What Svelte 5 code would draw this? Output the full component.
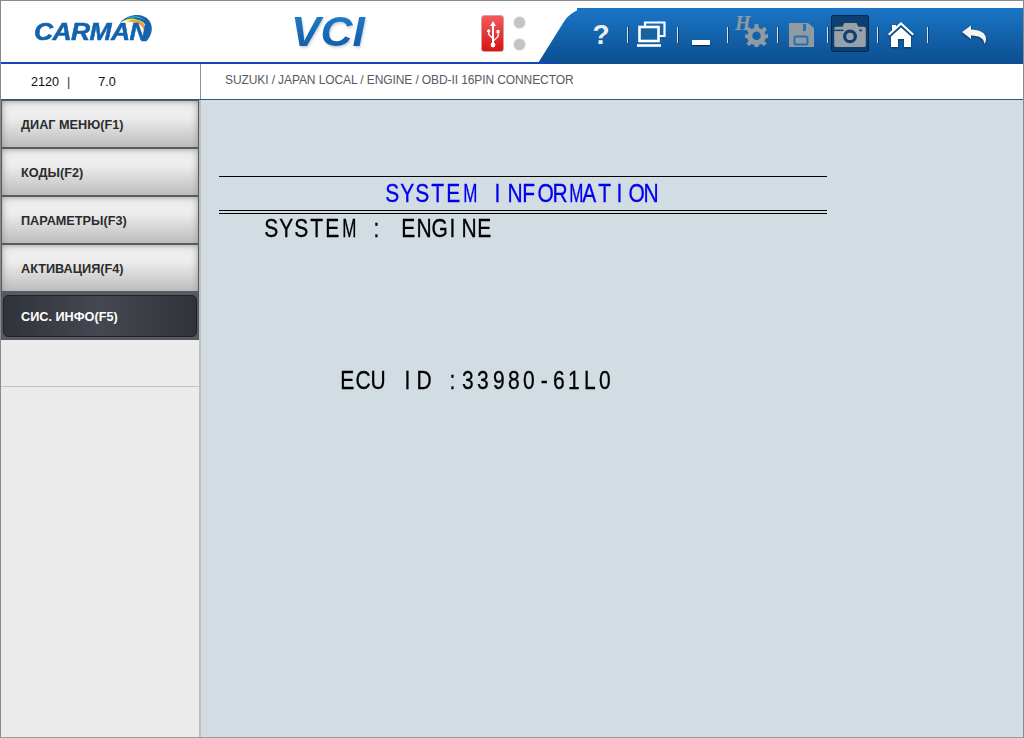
<script>
  const menu = [
    { label: 'ДИАГ МЕНЮ(F1)' },
    { label: 'КОДЫ(F2)' },
    { label: 'ПАРАМЕТРЫ(F3)' },
    { label: 'АКТИВАЦИЯ(F4)' },
    { label: 'СИС. ИНФО(F5)', active: true }
  ];
</script>

{#snippet mono(text)}
  {#each text as ch}<span class="cell"><span class="glyph" class:narrow={ch === 'M'}>{ch}</span></span>{/each}
{/snippet}

<div class="frame">
  <header class="header">
    <div class="carman">
      <svg class="arc" width="38" height="30" viewBox="0 0 40 32">
        <path d="M2 10C12 0 27 0 33 8C38 15 36 24 30 30L24 30C31 23 32 15 27 10C20 5 10 6 2 10Z" fill="#1664b0" />
        <path d="M9 9C16 6 24 7 27 11C30 15 30 19 28 24C28 18 26 14 22 12C18 10 14 9 9 9Z" fill="#e8a33c" />
        <path d="M4 9C9 6 15 5 20 7C15 7 10 8 4 9Z" fill="#f6df3a" />
        <path d="M8 6C15 2 24 3 29 8C23 4 15 4 8 6Z" fill="#35b4c8" />
      </svg>
      <span class="carman-text">CARMAN</span>
    </div>
    <div class="vci"><span>VCI</span></div>
    <div class="usb">
      <svg width="14" height="28" viewBox="0 0 14 28">
        <path d="M7 1L10 6H8V19.5L11.5 16V13H10.5V10H13.5V13H12.8V16.6L8 21.2V24H6V18.5L2 14.8V12.6A1.7 1.7 0 1 1 3.4 12.6V14.2L6 16.6V6H4Z" fill="#fff" />
        <circle cx="7" cy="25" r="2.4" fill="#fff" />
      </svg>
    </div>
    <div class="dots"><i></i><i></i></div>

    <div class="band">
      <div class="tool"><span class="help">?</span></div>
      <div class="tool">
        <svg width="30" height="27" viewBox="0 0 30 27" fill="none" stroke="#fff">
          <path d="M9 6V1.500H28.500V15H23" stroke-width="2.200" />
          <rect x="3.500" y="6" width="19" height="14" stroke-width="2.600" fill="#17639f" />
          <path d="M1 24.500H25" stroke-width="2.600" />
        </svg>
      </div>
      <div class="tool"><span class="minus"></span></div>
      <div class="tool">
        <span class="h">H</span>
        <svg class="gear" width="23" height="23" viewBox="0 0 26 26">
          <path fill="#8f9aa3" fill-rule="evenodd" d="M11 0H15L15.700 4.600L18.700 5.800L21.700 3.200L24.800 6.300L22.200 9.300L23.400 12.300L26 11V15.500L23.300 16.300L22.100 19.200L24.500 22L21.500 25L18.600 22.500L15.700 23.700L15 26H11L10.300 23.700L7.400 22.500L4.500 25L1.500 22L4 19.200L2.700 16.300L0 15.500V11L2.700 12.300L3.900 9.300L1.300 6.300L4.300 3.200L7.300 5.800L10.300 4.600ZM13 8.500A4.800 4.800 0 1 0 13 18.100A4.800 4.800 0 1 0 13 8.500Z" />
        </svg>
      </div>
      <div class="tool">
        <svg width="26" height="26" viewBox="0 0 26 26">
          <path fill="#8f9aa3" d="M1 1H20L26 6V25H1Z" />
          <rect x="15" y="2" width="3" height="7" fill="#2670b8" />
          <rect x="6.500" y="14.500" width="13" height="8" rx="1.500" fill="none" stroke="#2670b8" stroke-width="2" />
        </svg>
      </div>
      <div class="tool selected">
        <svg width="36" height="28" viewBox="0 0 36 28">
          <path fill="#98a1a8" fill-rule="evenodd" d="M3 5H10L12 1H25L27 5H33Q35 5 35 7V25Q35 27 33 27H3Q1 27 1 25V7Q1 5 3 5ZM18 8A7.500 7.500 0 1 0 18 23A7.500 7.500 0 1 0 18 8ZM18 11.500A4 4 0 1 1 18 19.500A4 4 0 1 1 18 11.500ZM28 8H31V10H28Z" />
          <path d="M1 9H11" stroke="#10406f" stroke-width="1.500" />
        </svg>
      </div>
      <div class="tool">
        <svg class="shadowed" width="28" height="27" viewBox="0 0 28 27">
          <path fill="#fff" fill-rule="evenodd" d="M14 1L27 13L25.500 14.500L14 4L2.500 14.500L1 13L5 9.300V4H9V5.600ZM14 6.500L24 15.500V26H17V18H11V26H4V15.500Z" />
        </svg>
      </div>
      <div class="tool last">
        <svg class="shadowed" width="26" height="20" viewBox="0 0 26 20">
          <path fill="#f3f3f3" d="M1 7L10 0.500V4.500C19 4.500 25 8 25 14C25 16 24.500 17.500 23.500 19C23 14 19 10.500 10 10.500V14Z" />
        </svg>
      </div>
    </div>
  </header>

  <div class="infobar">
    <div class="version">
      <span class="num">2120</span>
      <span class="pipe">|</span>
      <span class="ver">7.0</span>
    </div>
    <div class="crumbs">SUZUKI / JAPAN LOCAL / ENGINE / OBD-II 16PIN CONNECTOR</div>
  </div>

  <div class="main">
    <aside class="sidebar">
      <nav class="menu">
        {#each menu as item}
          <button class="item" class:active={item.active}>{item.label}</button>
        {/each}
      </nav>
      <div class="spare"></div>
    </aside>

    <section class="content">
      <div class="title">{@render mono('SYSTEM INFORMATION')}</div>
      <div class="line system">{@render mono('SYSTEM : ENGINE')}</div>
      <div class="line ecu">{@render mono('ECU ID :33980-61L0')}</div>
    </section>
  </div>
</div>

<style>
  :global(body) {
    margin: 0;
    background: #fff;
  }

  .frame {
    width: 1024px;
    height: 738px;
    box-sizing: border-box;
    border: 1px solid #8a8a8a;
    border-bottom: 1px solid #9a9a9a;
    display: flex;
    flex-direction: column;
    font-family: "Liberation Sans", Arial, sans-serif;
    overflow: hidden;
  }

  .header {
    height: 63px;
    flex: none;
    box-sizing: border-box;
    display: flex;
    background: #fff;
    position: relative;
  }

  /* blue rule runs a little way under the slanted end of the band */
  .header::after {
    content: "";
    position: absolute;
    left: 0;
    bottom: 0;
    width: 557px;
    height: 2px;
    background: #1346b8;
  }

  .carman {
    width: 120px;
    margin-left: 33px;
    position: relative;
    flex: none;
  }

  .carman-text {
    position: absolute;
    left: 0;
    top: 19px;
    font-size: 23px;
    line-height: 24px;
    font-weight: 700;
    font-style: italic;
    color: #1462ad;
    display: block;
    transform: scaleX(1.15);
    transform-origin: left;
    letter-spacing: -0.5px;
    -webkit-text-stroke: 0.5px #1462ad;
  }

  .arc {
    position: absolute;
    left: 84px;
    top: 12px;
  }

  .vci {
    margin-left: 137px;
    width: 75px;
    flex: none;
    padding-top: 8px;
    font-size: 43px;
    line-height: 44px;
    font-weight: 700;
    font-style: italic;
    filter: drop-shadow(1px 2px 1px #d0d4d8);
  }

  .vci span {
    display: inline-block;
    transform: scaleX(1.03);
    transform-origin: left;
    background: linear-gradient(#2080cc, #1058a5);
    -webkit-background-clip: text;
    background-clip: text;
    color: transparent;
    padding-right: 6px;
  }

  .usb {
    flex: none;
    margin: 14px 0 0 115px;
    width: 23px;
    height: 37px;
    border-radius: 3px;
    background: linear-gradient(#f25a5a, #d81414);
    border: 1px solid #d9a0a0;
    box-sizing: border-box;
    display: flex;
    align-items: center;
    justify-content: center;
  }

  .dots {
    flex: none;
    margin: 16px 0 0 10px;
    height: 33px;
    display: flex;
    flex-direction: column;
    justify-content: space-between;
  }

  .dots i {
    width: 11px;
    height: 11px;
    border-radius: 50%;
    background: #c4c4c4;
    box-shadow: 0 0 0 1px #e6e6e6;
  }

  .band {
    position: absolute;
    right: 0;
    top: 7px;
    bottom: 0;
    width: 446px;
    display: flex;
    background: linear-gradient(#1a76c6, #0b4e8f);
  }

  .band::before {
    content: "";
    position: absolute;
    top: 0;
    bottom: 0;
    left: -22px;
    width: 60px;
    background: linear-gradient(#1a76c6, #0b4e8f);
    border-top-left-radius: 14px;
    transform: skewX(-32deg);
  }

  .tool {
    position: relative;
    width: 50px;
    flex: none;
    box-sizing: border-box;
    padding-right: 2px;
    display: flex;
    align-items: center;
    justify-content: center;
    margin-bottom: 3px;
  }

  .tool::after {
    content: "";
    position: absolute;
    right: -1px;
    top: 19px;
    height: 16px;
    width: 1px;
    background: #d9dde0;
    box-shadow: 1px 0 0 #123f6a;
  }

  .tool.last {
    width: 96px;
  }

  .tool.last::after {
    display: none;
  }

  .help {
    color: #eeeeee;
    font-size: 28px;
    font-weight: 700;
    line-height: 30px;
  }

  .minus {
    width: 18px;
    height: 5px;
    margin-top: 15px;
    background: #fff;
    box-shadow: 0 1px 1px #0a2f55;
  }

  .h {
    position: absolute;
    left: 8px;
    top: 4px;
    font-family: "Liberation Serif", serif;
    font-size: 20px;
    font-weight: 700;
    font-style: italic;
    color: #8f9aa3;
  }

  .gear {
    margin: 2px 0 0 11px;
  }

  .selected::before {
    content: "";
    position: absolute;
    left: 4px;
    right: 8px;
    top: 7px;
    height: 37px;
    box-sizing: border-box;
    background: #0f3f70;
    border: 1px solid #062848;
    border-radius: 2px;
  }

  .selected svg {
    position: relative;
    margin-right: 2px;
    width: 34px;
    height: 26px;
  }

  .shadowed {
    filter: drop-shadow(0 1px 1px #0a2f55);
  }

  .infobar {
    height: 36px;
    flex: none;
    display: flex;
    background: #fff;
    border-bottom: 1px solid #2a5a80;
    box-sizing: border-box;
    font-size: 12.6px;
  }

  .version {
    width: 200px;
    flex: none;
    box-sizing: border-box;
    border-right: 1px solid #8f8f8f;
    padding: 11px 0 0 30px;
    color: #111;
    display: flex;
  }

  .pipe {
    color: #5a0a5a;
    margin-left: 8px;
  }

  .ver {
    margin-left: 28px;
  }

  .crumbs {
    padding: 9px 0 0 24px;
    color: #555a64;
    font-size: 12px;
    letter-spacing: -0.1px;
  }

  .main {
    flex: 1;
    display: flex;
    min-height: 0;
  }

  .sidebar {
    width: 200px;
    flex: none;
    box-sizing: border-box;
    background: #ebebeb;
    border-right: 2px solid #bdbdbd;
    display: flex;
    flex-direction: column;
  }

  .menu {
    background: #565a62;
    padding: 1px 0 3px 1px;
    display: flex;
    flex-direction: column;
    gap: 2px;
  }

  .item {
    height: 46px;
    width: 196px;
    border: 0;
    padding: 2px 0 0 19px;
    text-align: left;
    font: 700 12.7px "Liberation Sans", Arial, sans-serif;
    color: #2c2c2c;
    background: linear-gradient(#efefef, #ededed 35%, #bdbdbd);
    box-shadow: inset 5px 5px 7px -5px #9a9a9a, inset -5px 0 7px -5px #9a9a9a;
  }

  .item.active {
    margin-top: 2px;
    height: 42px;
    width: 194px;
    margin-left: 1px;
    color: #fff;
    border: 1px solid #1f2126;
    border-radius: 5px;
    padding: 2px 0 0 17px;
    background: linear-gradient(90deg, #30333a, #454850 50%, #30333a);
    box-shadow: none;
  }

  .spare {
    height: 46px;
    border-bottom: 1px solid #c4c4c4;
  }

  .content {
    flex: 1;
    background: #d2dce3;
    padding: 76px 0 0 18px;
    color: #000;
    font-family: "Liberation Sans", Arial, sans-serif;
  }

  .title {
    width: 608px;
    height: 35px;
    box-sizing: border-box;
    padding-left: 165px;
    border-top: 1px solid #000;
    border-bottom: 1px solid #000;
    color: #0000f0;
    line-height: 33px;
    box-shadow: 0 2px 0 #d2dce3, 0 3px 0 #000;
    white-space: pre;
  }

  .line {
    white-space: pre;
    height: 28px;
    line-height: 28px;
  }

  .system {
    margin: 3px 0 0 44px;
  }

  .ecu {
    margin: 124px 0 0 120px;
  }

  .cell {
    display: inline-block;
    width: 15.2px;
    text-align: center;
    font-size: 25px;
    -webkit-text-stroke: 0.3px currentColor;
  }

  .glyph {
    display: inline-block;
    transform: scaleX(0.84);
  }

  .glyph.narrow {
    transform: scaleX(0.68);
  }
</style>
